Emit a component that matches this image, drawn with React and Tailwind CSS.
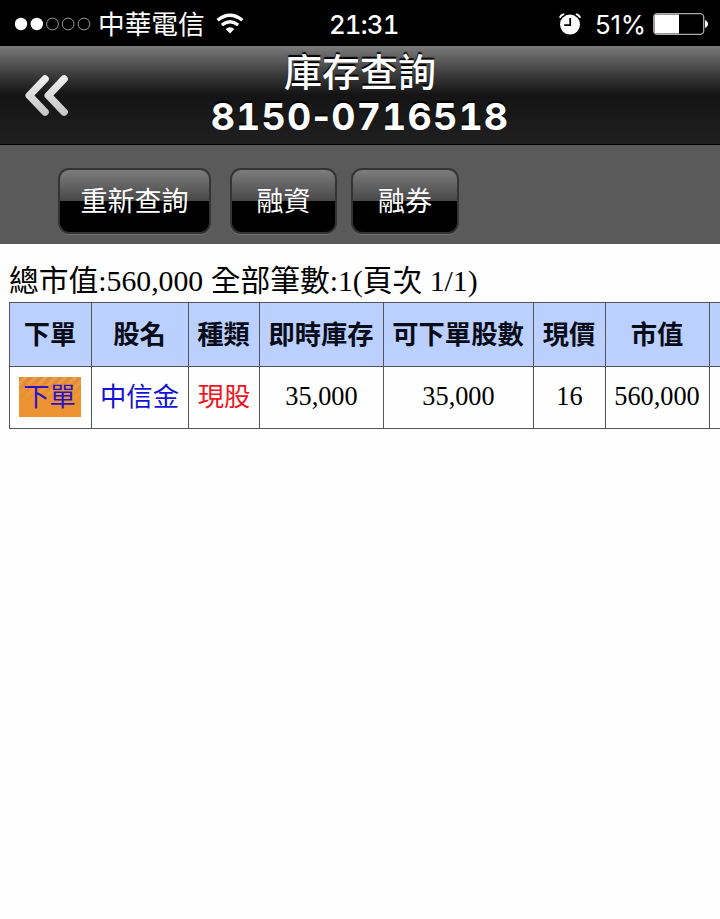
const columns = ['下單', '股名', '種類', '即時庫存', '可下單股數', '現價', '市值', ''];

const cellBase = 'flex items-center justify-center whitespace-nowrap border-l border-t border-[#555]';

function StatusBar() {
  return (
    <div className="flex h-[46px] items-center bg-black pl-[15px] text-white">
      <svg width="76" height="14" viewBox="0 0 76 14" className="mt-[2px] shrink-0">
        <circle cx="6" cy="7" r="6.2" fill="#fff" />
        <circle cx="21.8" cy="7" r="6.2" fill="#fff" />
        <g fill="none" stroke="#aaa" strokeWidth="0.9">
          <circle cx="37.5" cy="7" r="5.9" />
          <circle cx="53.2" cy="7" r="5.9" />
          <circle cx="69" cy="7" r="5.9" />
        </g>
      </svg>
      <span className="ml-[7px] w-[108px] whitespace-nowrap font-['Noto_Sans_CJK_TC',sans-serif] text-[26.7px] leading-[46px] font-normal">中華電信</span>
      <svg width="28" height="22" viewBox="0 0 28 22" className="mt-[2px] ml-[10px] shrink-0">
        <g fill="none" stroke="#fff" strokeWidth="3.3">
          <path d="M1.6 7.2 Q14 -2.8 26.4 7.2" />
          <path d="M5.8 12 Q14 5.6 22.2 12" />
        </g>
        <path d="M9.7 15.9 Q14 12.4 18.3 15.9 L14 20.5 Z" fill="#fff" />
      </svg>
      <span className="mt-[3px] ml-[85px] w-[72px] whitespace-nowrap font-['Inter',sans-serif] text-[25.7px] leading-[48px] font-medium tracking-[-0.8px] tabular-nums">21:31</span>
      <svg width="22" height="22" viewBox="0 0 22 22" className="mt-[2px] ml-[158px] shrink-0">
        <circle cx="11" cy="11.6" r="10" fill="#fff" />
        <path d="M11.2 4.9 V12.2 H5.2" fill="none" stroke="#000" strokeWidth="1.8" />
        <path d="M0.9 4.7 Q2 1.5 5.2 1.1 M21.1 4.7 Q20 1.5 16.8 1.1" fill="none" stroke="#fff" strokeWidth="1.9" />
      </svg>
      <span className="mt-[3px] ml-[14px] w-[51px] whitespace-nowrap font-['Inter',sans-serif] text-[25.8px] leading-[48px] tracking-[-0.2px]">51%</span>
      <svg width="56" height="24" viewBox="0 0 56 24" className="mt-[2px] ml-[7px] shrink-0">
        <rect x="0.7" y="1.7" width="50" height="20.6" rx="3.6" fill="#000" stroke="#aaa" strokeWidth="1.3" />
        <path d="M4 2.5 H26 V21.5 H4 Q1.5 21.5 1.5 19 V5 Q1.5 2.5 4 2.5 Z" fill="#fff" />
        <path d="M52 8.2 Q55 9.2 55 12 Q55 14.8 52 15.8 Z" fill="#fff" />
      </svg>
    </div>
  );
}

function Header() {
  return (
    <header className="grid h-[99px] grid-cols-[120px_1fr_120px] border-b border-black bg-linear-to-b from-[#7b7b7b] from-0% via-[#141414] via-50% to-[#202020] to-100%">
      <svg width="52" height="50" viewBox="0 0 52 50" className="mt-[25px] ml-[21px]">
        <defs>
          <linearGradient id="chevron" gradientUnits="userSpaceOnUse" x1="0" y1="4" x2="0" y2="45">
            <stop offset="0" stopColor="#f2f2f2" />
            <stop offset="1" stopColor="#c4c4c4" />
          </linearGradient>
        </defs>
        <g fill="none" stroke="url(#chevron)" strokeWidth="7.6" strokeLinecap="round" strokeLinejoin="round">
          <path d="M24 8 L8.3 24.5 L24 41" />
          <path d="M43 8 L27.3 24.5 L43 41" />
        </g>
      </svg>
      <div className="flex flex-col items-center text-white [text-shadow:0_-2px_1px_#000]">
        <div className="h-[48px] whitespace-nowrap font-['Noto_Sans_CJK_TC',sans-serif] text-[38px] leading-[47px] font-medium">庫存查詢</div>
        <div className="h-[44px] whitespace-nowrap font-['Inter',sans-serif] text-[37.5px] leading-[46px] font-bold tracking-[1.2px] tabular-nums">
          8150<span className="normal-nums">-</span>0716518
        </div>
      </div>
    </header>
  );
}

function GlossButton({ children, className }) {
  return (
    <button className={`h-[66px] rounded-[11px] border-2 border-[#343434] bg-linear-to-b from-[#7d7d7d] from-0% via-[#484848] via-50% to-black to-50% font-['Noto_Sans_CJK_TC',sans-serif] text-[27px] whitespace-nowrap text-white shadow-[0_1px_0_#707070] ${className}`}>
      <span className="block h-[62px] leading-[60px]">{children}</span>
    </button>
  );
}

export default function App() {
  return (
    <div className="h-[919px] w-[720px] overflow-hidden bg-[#fefefe]">
      <StatusBar />
      <Header />
      <nav className="flex h-[99px] bg-[#5a5a5a] pt-[23px] pl-[58px]">
        <GlossButton className="w-[153px]">重新查詢</GlossButton>
        <GlossButton className="ml-[19px] w-[107px]">融資</GlossButton>
        <GlossButton className="ml-[14px] w-[108px]">融券</GlossButton>
      </nav>
      <main className="pt-[16px] pl-[9px] font-['Liberation_Serif','Noto_Sans_CJK_TC',serif] text-black">
        <p className="h-[42px] whitespace-nowrap text-[29.75px] leading-[41px]">總市值:560,000 全部筆數:1(頁次 1/1)</p>
        <div className="grid w-[730px] grid-cols-[82px_97px_71px_124px_150px_72px_104px_30px] grid-rows-[64px_62px] border-b border-[#555] text-[26.3px] leading-[38px]">
          {columns.map((label, i) => (
            <div key={i} className={`${cellBase} bg-[#bbd0ff] pt-[2px] pr-px font-bold text-[#080c18]`}>{label}</div>
          ))}
          <div className={`${cellBase} pr-[2px] pb-[2px]`}>
            <a className="flex h-[40px] w-[62px] items-center justify-center bg-[linear-gradient(to_bottom,rgba(237,146,48,0)_0%,#ed9230_65%),repeating-linear-gradient(135deg,#dd8b3c_0px,#dd8b3c_3px,#f0a04c_4px,#ee983e_7px)] pt-[2px] text-[#2a12c8]">下單</a>
          </div>
          <div className={`${cellBase} pr-px text-[#1212d8]`}>中信金</div>
          <div className={`${cellBase} text-[#ee1520]`}>現股</div>
          <div className={`${cellBase} pb-[2px]`}>35,000</div>
          <div className={`${cellBase} pb-[2px]`}>35,000</div>
          <div className={`${cellBase} pb-[2px]`}>16</div>
          <div className={`${cellBase} pr-px pb-[2px]`}>560,000</div>
          <div className={cellBase} />
        </div>
      </main>
    </div>
  );
}
